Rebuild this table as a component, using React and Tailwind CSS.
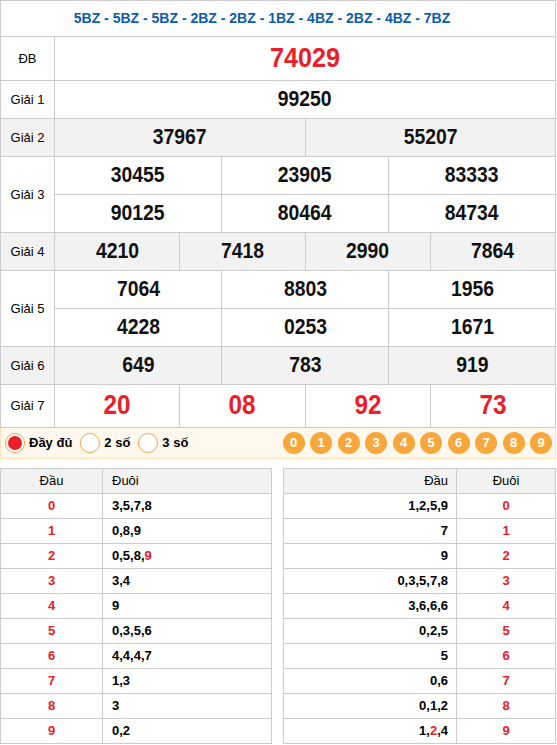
const prizes = [
  { label: "Giải 1", lines: [["99250"]] },
  { label: "Giải 2", gray: true, lines: [["37967", "55207"]] },
  { label: "Giải 3", lines: [["30455", "23905", "83333"], ["90125", "80464", "84734"]] },
  { label: "Giải 4", gray: true, lines: [["4210", "7418", "2990", "7864"]] },
  { label: "Giải 5", lines: [["7064", "8803", "1956"], ["4228", "0253", "1671"]] },
  { label: "Giải 6", gray: true, lines: [["649", "783", "919"]] },
]

const dau = [
  ["3,5,7,8"], ["0,8,9"], ["0,5,8,", "9"], ["3,4"], ["9"],
  ["0,3,5,6"], ["4,4,4,7"], ["1,3"], ["3"], ["0,2"],
]

const duoi = [
  ["1,2,5,9"], ["7"], ["9"], ["0,3,5,7,8"], ["3,6,6,6"],
  ["0,2,5"], ["5"], ["0,6"], ["0,1,2"], ["1,", "2", ",4"],
]

function Nums({ parts }) {
  return parts.map((p, i) => (
    <span key={i} className={i === 1 ? "text-[#e8202a]" : ""}>{p}</span>
  ))
}

function Prize({ label, gray, lines }) {
  return (
    <div className={"flex " + (gray ? "bg-[#f2f2f2]" : "bg-white")}>
      <div className="w-[54px] shrink-0 border-r border-b border-[#cccccc] flex items-center justify-center text-[13px] text-black">
        {label}
      </div>
      <div className="flex-1 flex flex-col">
        {lines.map((line, i) => (
          <div key={i} className="flex h-[38px] border-b border-[#cccccc]">
            {line.map((n, j) => (
              <div key={j} className="flex-1 border-r border-[#cccccc] flex items-center justify-center pb-[2px]">
                <span className="inline-block scale-x-[0.88] text-[22px] font-bold text-[#111]">{n}</span>
              </div>
            ))}
          </div>
        ))}
      </div>
    </div>
  )
}

export default function App() {
  return (
    <div className="w-[556px] bg-white font-['Liberation_Sans',Arial,sans-serif] text-black">
      <div className="border-t border-l border-[#cccccc]">
        <div className="h-[36px] border-b border-r border-[#cccccc] flex items-center justify-center pr-[32px] text-[14px] font-bold text-[#0b5cab]">
          5BZ - 5BZ - 5BZ - 2BZ - 2BZ - 1BZ - 4BZ - 2BZ - 4BZ - 7BZ
        </div>
        <div className="flex h-[44px]">
          <div className="w-[54px] shrink-0 border-r border-b border-[#cccccc] flex items-center justify-center text-[13px]">ĐB</div>
          <div className="flex-1 border-r border-b border-[#cccccc] flex items-center justify-center pb-[2px]">
            <span className="inline-block scale-x-[0.9] text-[28px] font-bold text-[#e8202a]">74029</span>
          </div>
        </div>
        {prizes.map((p) => (
          <Prize key={p.label} {...p} />
        ))}
        <div className="flex h-[43px]">
          <div className="w-[54px] shrink-0 border-r border-b border-[#cccccc] flex items-center justify-center text-[13px]">Giải 7</div>
          {["20", "08", "92", "73"].map((n) => (
            <div key={n} className="flex-1 border-r border-b border-[#cccccc] flex items-center justify-center pb-[2px]">
              <span className="inline-block scale-x-[0.9] text-[27px] font-bold text-[#e8202a]">{n}</span>
            </div>
          ))}
        </div>
      </div>

      <div className="h-[31px] border-x border-b border-[#fde2bb] bg-[#fff8ee] flex items-center justify-between pl-1 pr-[3px]">
        <div className="flex items-center text-[13px] font-bold">
          <span className="w-5 h-5 rounded-full border border-[#f3a64a] bg-white flex items-center justify-center">
            <span className="w-[14px] h-[14px] rounded-full bg-[#e8202a]" />
          </span>
          <span className="ml-[4px]">Đầy đủ</span>
          <span className="ml-[8px] w-5 h-5 rounded-full border border-[#f3a64a] bg-white" />
          <span className="ml-[4px]">2 số</span>
          <span className="ml-[8px] w-5 h-5 rounded-full border border-[#f3a64a] bg-white" />
          <span className="ml-[4px]">3 số</span>
        </div>
        <div className="flex gap-[5.5px]">
          {[0, 1, 2, 3, 4, 5, 6, 7, 8, 9].map((d) => (
            <span key={d} className="w-[22px] h-[22px] rounded-full bg-[#f8a73b] text-white text-[13px] font-bold flex items-center justify-center">
              {d}
            </span>
          ))}
        </div>
      </div>

      <div className="mt-[9px] flex justify-between text-[13px]">
        <div className="w-[272px] border-l border-t border-[#cccccc]">
          <div className="flex h-[25px] bg-[#f2f2f2] border-b border-[#cccccc]">
            <div className="w-[102px] border-r border-[#cccccc] flex items-center justify-center">Đầu</div>
            <div className="flex-1 border-r border-[#cccccc] flex items-center pl-[9px]">Đuôi</div>
          </div>
          {dau.map((parts, i) => (
            <div key={i} className="flex h-[25px] border-b border-[#cccccc] font-bold">
              <div className="w-[102px] border-r border-[#cccccc] flex items-center justify-center text-[#e8202a]">{i}</div>
              <div className="flex-1 border-r border-[#cccccc] flex items-center pl-[9px]">
                <Nums parts={parts} />
              </div>
            </div>
          ))}
        </div>
        <div className="w-[273px] border-l border-t border-[#cccccc]">
          <div className="flex h-[25px] bg-[#f2f2f2] border-b border-[#cccccc]">
            <div className="flex-1 border-r border-[#cccccc] flex items-center justify-end pr-[8px]">Đầu</div>
            <div className="w-[99px] border-r border-[#cccccc] flex items-center justify-center">Đuôi</div>
          </div>
          {duoi.map((parts, i) => (
            <div key={i} className="flex h-[25px] border-b border-[#cccccc] font-bold">
              <div className="flex-1 border-r border-[#cccccc] flex items-center justify-end pr-[8px]">
                <Nums parts={parts} />
              </div>
              <div className="w-[99px] border-r border-[#cccccc] flex items-center justify-center text-[#e8202a]">{i}</div>
            </div>
          ))}
        </div>
      </div>
    </div>
  )
}
